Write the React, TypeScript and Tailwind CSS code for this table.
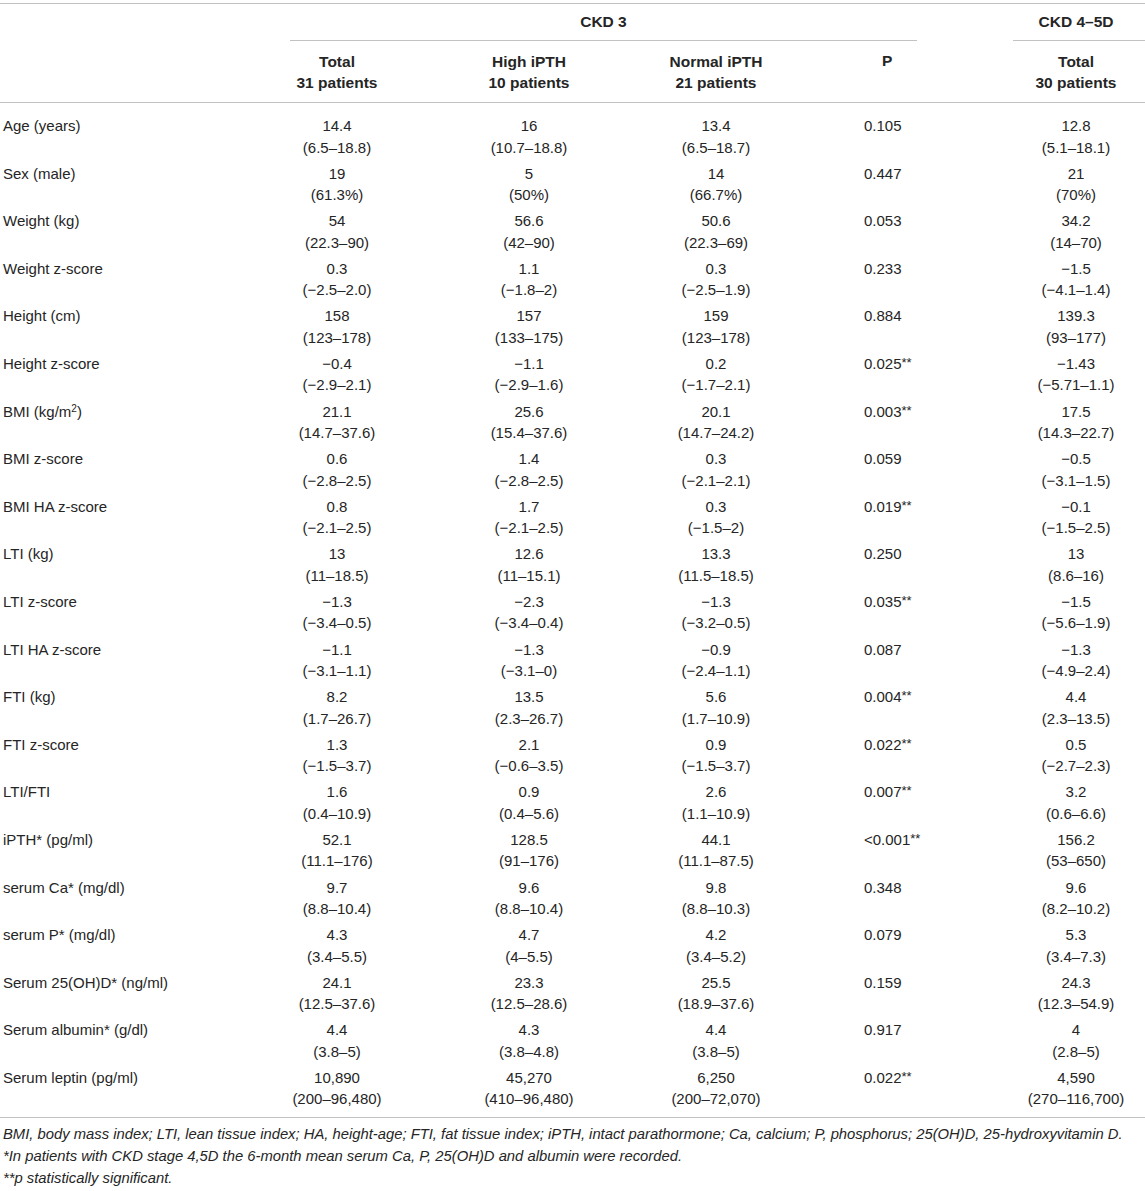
import React from "react";

type Row = {
  label: React.ReactNode;
  total: [string, string];
  high: [string, string];
  normal: [string, string];
  p: string;
  ckd45: [string, string];
};

const rows: Row[] = [
  { label: "Age (years)", total: ["14.4", "(6.5–18.8)"], high: ["16", "(10.7–18.8)"], normal: ["13.4", "(6.5–18.7)"], p: "0.105", ckd45: ["12.8", "(5.1–18.1)"] },
  { label: "Sex (male)", total: ["19", "(61.3%)"], high: ["5", "(50%)"], normal: ["14", "(66.7%)"], p: "0.447", ckd45: ["21", "(70%)"] },
  { label: "Weight (kg)", total: ["54", "(22.3–90)"], high: ["56.6", "(42–90)"], normal: ["50.6", "(22.3–69)"], p: "0.053", ckd45: ["34.2", "(14–70)"] },
  { label: "Weight z-score", total: ["0.3", "(−2.5–2.0)"], high: ["1.1", "(−1.8–2)"], normal: ["0.3", "(−2.5–1.9)"], p: "0.233", ckd45: ["−1.5", "(−4.1–1.4)"] },
  { label: "Height (cm)", total: ["158", "(123–178)"], high: ["157", "(133–175)"], normal: ["159", "(123–178)"], p: "0.884", ckd45: ["139.3", "(93–177)"] },
  { label: "Height z-score", total: ["−0.4", "(−2.9–2.1)"], high: ["−1.1", "(−2.9–1.6)"], normal: ["0.2", "(−1.7–2.1)"], p: "0.025**", ckd45: ["−1.43", "(−5.71–1.1)"] },
  {
    label: (
      <>
        BMI (kg/m<sup className="text-[10px]">2</sup>)
      </>
    ),
    total: ["21.1", "(14.7–37.6)"], high: ["25.6", "(15.4–37.6)"], normal: ["20.1", "(14.7–24.2)"], p: "0.003**", ckd45: ["17.5", "(14.3–22.7)"],
  },
  { label: "BMI z-score", total: ["0.6", "(−2.8–2.5)"], high: ["1.4", "(−2.8–2.5)"], normal: ["0.3", "(−2.1–2.1)"], p: "0.059", ckd45: ["−0.5", "(−3.1–1.5)"] },
  { label: "BMI HA z-score", total: ["0.8", "(−2.1–2.5)"], high: ["1.7", "(−2.1–2.5)"], normal: ["0.3", "(−1.5–2)"], p: "0.019**", ckd45: ["−0.1", "(−1.5–2.5)"] },
  { label: "LTI (kg)", total: ["13", "(11–18.5)"], high: ["12.6", "(11–15.1)"], normal: ["13.3", "(11.5–18.5)"], p: "0.250", ckd45: ["13", "(8.6–16)"] },
  { label: "LTI z-score", total: ["−1.3", "(−3.4–0.5)"], high: ["−2.3", "(−3.4–0.4)"], normal: ["−1.3", "(−3.2–0.5)"], p: "0.035**", ckd45: ["−1.5", "(−5.6–1.9)"] },
  { label: "LTI HA z-score", total: ["−1.1", "(−3.1–1.1)"], high: ["−1.3", "(−3.1–0)"], normal: ["−0.9", "(−2.4–1.1)"], p: "0.087", ckd45: ["−1.3", "(−4.9–2.4)"] },
  { label: "FTI (kg)", total: ["8.2", "(1.7–26.7)"], high: ["13.5", "(2.3–26.7)"], normal: ["5.6", "(1.7–10.9)"], p: "0.004**", ckd45: ["4.4", "(2.3–13.5)"] },
  { label: "FTI z-score", total: ["1.3", "(−1.5–3.7)"], high: ["2.1", "(−0.6–3.5)"], normal: ["0.9", "(−1.5–3.7)"], p: "0.022**", ckd45: ["0.5", "(−2.7–2.3)"] },
  { label: "LTI/FTI", total: ["1.6", "(0.4–10.9)"], high: ["0.9", "(0.4–5.6)"], normal: ["2.6", "(1.1–10.9)"], p: "0.007**", ckd45: ["3.2", "(0.6–6.6)"] },
  { label: "iPTH* (pg/ml)", total: ["52.1", "(11.1–176)"], high: ["128.5", "(91–176)"], normal: ["44.1", "(11.1–87.5)"], p: "<0.001**", ckd45: ["156.2", "(53–650)"] },
  { label: "serum Ca* (mg/dl)", total: ["9.7", "(8.8–10.4)"], high: ["9.6", "(8.8–10.4)"], normal: ["9.8", "(8.8–10.3)"], p: "0.348", ckd45: ["9.6", "(8.2–10.2)"] },
  { label: "serum P* (mg/dl)", total: ["4.3", "(3.4–5.5)"], high: ["4.7", "(4–5.5)"], normal: ["4.2", "(3.4–5.2)"], p: "0.079", ckd45: ["5.3", "(3.4–7.3)"] },
  { label: "Serum 25(OH)D* (ng/ml)", total: ["24.1", "(12.5–37.6)"], high: ["23.3", "(12.5–28.6)"], normal: ["25.5", "(18.9–37.6)"], p: "0.159", ckd45: ["24.3", "(12.3–54.9)"] },
  { label: "Serum albumin* (g/dl)", total: ["4.4", "(3.8–5)"], high: ["4.3", "(3.8–4.8)"], normal: ["4.4", "(3.8–5)"], p: "0.917", ckd45: ["4", "(2.8–5)"] },
  { label: "Serum leptin (pg/ml)", total: ["10,890", "(200–96,480)"], high: ["45,270", "(410–96,480)"], normal: ["6,250", "(200–72,070)"], p: "0.022**", ckd45: ["4,590", "(270–116,700)"] },
];

const cols = "grid grid-cols-[240px_194px_190px_184px_199px_138px]";

const Pair = ({ v }: { v: [string, string] }) => (
  <div className="flex flex-col items-center text-center">
    <span>{v[0]}</span>
    <span>{v[1]}</span>
  </div>
);

const PValue = ({ p }: { p: string }) => {
  const stars = p.endsWith("**");
  const base = stars ? p.slice(0, -2) : p;
  return (
    <div className="pl-[56px]">
      {base}
      {stars && <span className="relative -top-[2px] text-[13px]">**</span>}
    </div>
  );
};

export default function App() {
  return (
    <div
      className="w-[1145px] bg-white pt-[3px] text-[15px] text-[#252525]"
      style={{ fontFamily: '"Liberation Sans", Arial, sans-serif' }}
    >
      <div className="border-t border-[#c2c2c2]" />

      {/* header */}
      <div className={`${cols} text-[15.5px] font-bold`}>
        <div />
        <div className="col-span-4">
          <div className="ml-[50px] mr-[90px] flex h-[37px] items-center justify-center border-b border-[#c2c2c2]">
            CKD 3
          </div>
        </div>
        <div>
          <div className="ml-[6px] flex h-[37px] items-center justify-center border-b border-[#c2c2c2] pr-[6px]">
            CKD 4–5D
          </div>
        </div>
      </div>
      <div className={`${cols} h-[62px] items-center border-b border-[#c2c2c2] text-[15.5px] font-bold leading-[21px]`}>
        <div />
        <div className="text-center">
          Total
          <br />
          31 patients
        </div>
        <div className="text-center">
          High iPTH
          <br />
          10 patients
        </div>
        <div className="text-center">
          Normal iPTH
          <br />
          21 patients
        </div>
        <div className="self-start pt-[9px] pl-[74px]">P</div>
        <div className="text-center">
          Total
          <br />
          30 patients
        </div>
      </div>

      {/* body */}
      <div className="border-b border-[#c2c2c2] pt-[10px] pb-[5px] leading-[21.5px]">
        {rows.map((r, i) => (
          <div key={i} className={`${cols} h-[47.6px] pt-[2px]`}>
            <div className="pl-[3px]">{r.label}</div>
            <Pair v={r.total} />
            <Pair v={r.high} />
            <Pair v={r.normal} />
            <PValue p={r.p} />
            <Pair v={r.ckd45} />
          </div>
        ))}
      </div>

      {/* footnotes */}
      <div className="pl-[3px] pt-[5px] text-[14.8px] italic leading-[22px]">
        <p>
          BMI, body mass index; LTI, lean tissue index; HA, height-age; FTI, fat tissue index; iPTH, intact
          parathormone; Ca, calcium; P, phosphorus; 25(OH)D, 25-hydroxyvitamin D.
        </p>
        <p>*In patients with CKD stage 4,5D the 6-month mean serum Ca, P, 25(OH)D and albumin were recorded.</p>
        <p>**p statistically significant.</p>
      </div>
    </div>
  );
}
